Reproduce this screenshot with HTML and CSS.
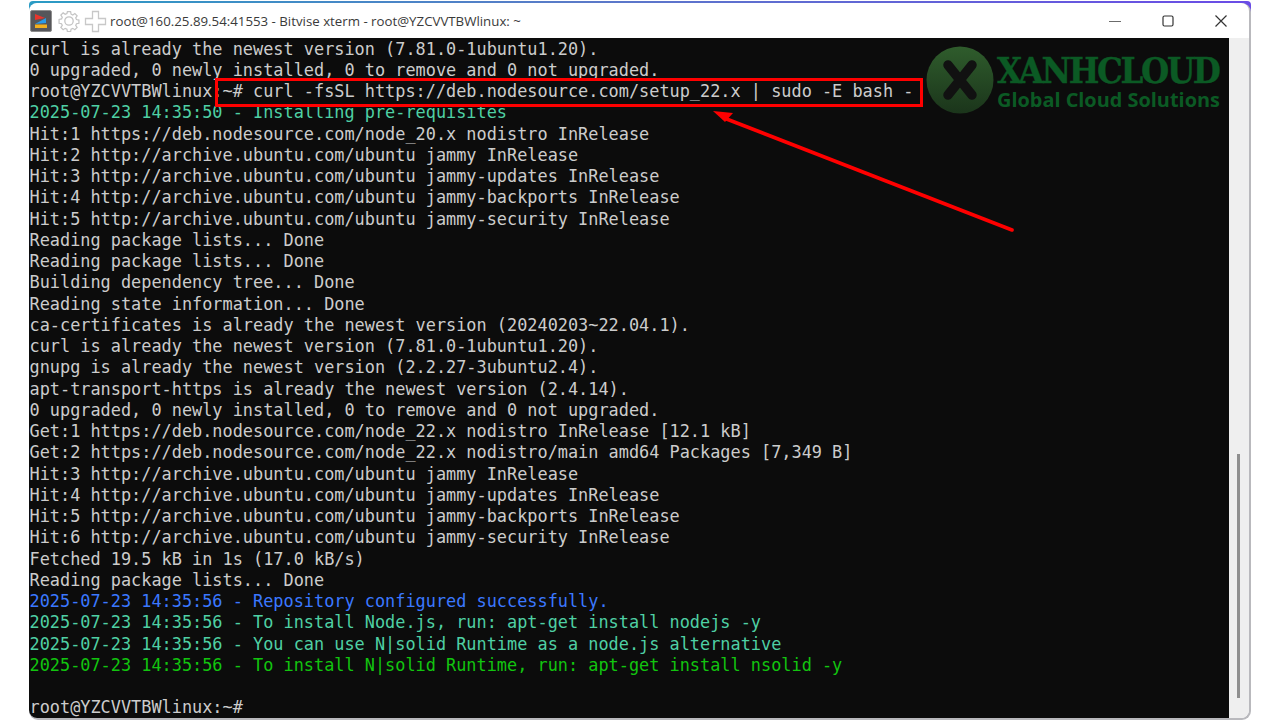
FILE: index.html
```html
<!DOCTYPE html>
<html lang="en">
<head>
<meta charset="utf-8">
<title>Bitvise xterm</title>
<link rel="stylesheet" href="styles.css">
</head>
<body>
<div class="desktop">
  <div class="backdrop"></div>
  <div class="window">
    <header class="titlebar">
      <div class="title-left">
        <svg class="app-icon" width="22" height="22" viewBox="0 0 22 22">
          <rect x="0.5" y="0.5" width="21" height="21" rx="1.5" fill="#56565a" stroke="#8d8d8d"/>
          <path d="M5 4 L15 8 L5 10 Z" fill="#e8352c"/>
          <path d="M16 8 L5 14 L16 13 Z" fill="#2a9be8"/>
          <rect x="5" y="14.5" width="12" height="3.5" fill="#f2b01e"/>
        </svg>
        <svg class="gear-icon" width="22" height="22" viewBox="0 0 22 22" fill="none" stroke="#c4c4c4" stroke-width="1.3">
          <circle cx="11" cy="11" r="4.2"/>
          <path d="M9.3 1.2h3.4l.5 2.6 1.8.8 2.2-1.5 2.4 2.4-1.5 2.2.8 1.8 2.6.5v3.4l-2.6.5-.8 1.8 1.5 2.2-2.4 2.4-2.2-1.5-1.8.8-.5 2.6H9.3l-.5-2.6-1.8-.8-2.2 1.5-2.4-2.4 1.5-2.2-.8-1.8-2.6-.5V9.3l2.6-.5.8-1.8-1.5-2.2 2.4-2.4 2.2 1.5 1.8-.8z" transform="translate(0.6 0.6) scale(.945)"/>
        </svg>
        <svg class="plus-icon" width="23" height="23" viewBox="0 0 23 23" fill="none" stroke="#c8c8c8" stroke-width="1.3">
          <path d="M8.5 1.5h6v7h7v6h-7v7h-6v-7h-7v-6h7z"/>
        </svg>
        <span class="title-text">root@160.25.89.54:41553 - Bitvise xterm - root@YZCVVTBWlinux: ~</span>
      </div>
      <div class="controls">
        <svg width="12" height="12" viewBox="0 0 12 12" stroke="#6b6b6b" stroke-width="1.2"><path d="M0 6.5h12"/></svg>
        <svg width="12" height="12" viewBox="0 0 12 12" fill="none" stroke="#333" stroke-width="1.2"><rect x="1" y="1" width="10" height="10" rx="1.5"/></svg>
        <svg width="12" height="12" viewBox="0 0 12 12" stroke="#333" stroke-width="1.2"><path d="M0.5 0.5l11 11M11.5 0.5l-11 11"/></svg>
      </div>
    </header>
    <div class="body">
      <main class="terminal">
        <div class="line">curl is already the newest version (7.81.0-1ubuntu1.20).</div>
        <div class="line">0 upgraded, 0 newly installed, 0 to remove and 0 not upgraded.</div>
        <div class="line">root@YZCVVTBWlinux:~# curl -fsSL https://deb.nodesource.com/setup_22.x | sudo -E bash -</div>
        <div class="line teal">2025-07-23 14:35:50 - Installing pre-requisites</div>
        <div class="line">Hit:1 https://deb.nodesource.com/node_20.x nodistro InRelease</div>
        <div class="line">Hit:2 http://archive.ubuntu.com/ubuntu jammy InRelease</div>
        <div class="line">Hit:3 http://archive.ubuntu.com/ubuntu jammy-updates InRelease</div>
        <div class="line">Hit:4 http://archive.ubuntu.com/ubuntu jammy-backports InRelease</div>
        <div class="line">Hit:5 http://archive.ubuntu.com/ubuntu jammy-security InRelease</div>
        <div class="line">Reading package lists... Done</div>
        <div class="line">Reading package lists... Done</div>
        <div class="line">Building dependency tree... Done</div>
        <div class="line">Reading state information... Done</div>
        <div class="line">ca-certificates is already the newest version (20240203~22.04.1).</div>
        <div class="line">curl is already the newest version (7.81.0-1ubuntu1.20).</div>
        <div class="line">gnupg is already the newest version (2.2.27-3ubuntu2.4).</div>
        <div class="line">apt-transport-https is already the newest version (2.4.14).</div>
        <div class="line">0 upgraded, 0 newly installed, 0 to remove and 0 not upgraded.</div>
        <div class="line">Get:1 https://deb.nodesource.com/node_22.x nodistro InRelease [12.1 kB]</div>
        <div class="line">Get:2 https://deb.nodesource.com/node_22.x nodistro/main amd64 Packages [7,349 B]</div>
        <div class="line">Hit:3 http://archive.ubuntu.com/ubuntu jammy InRelease</div>
        <div class="line">Hit:4 http://archive.ubuntu.com/ubuntu jammy-updates InRelease</div>
        <div class="line">Hit:5 http://archive.ubuntu.com/ubuntu jammy-backports InRelease</div>
        <div class="line">Hit:6 http://archive.ubuntu.com/ubuntu jammy-security InRelease</div>
        <div class="line">Fetched 19.5 kB in 1s (17.0 kB/s)</div>
        <div class="line">Reading package lists... Done</div>
        <div class="line blue">2025-07-23 14:35:56 - Repository configured successfully.</div>
        <div class="line teal">2025-07-23 14:35:56 - To install Node.js, run: apt-get install nodejs -y</div>
        <div class="line teal">2025-07-23 14:35:56 - You can use N|solid Runtime as a node.js alternative</div>
        <div class="line green">2025-07-23 14:35:56 - To install N|solid Runtime, run: apt-get install nsolid -y</div>
        <div class="line">&nbsp;</div>
        <div class="line">root@YZCVVTBWlinux:~#</div>
      </main>
      <aside class="scrollbar"><div class="thumb"></div></aside>
    </div>
  </div>

  <div class="logo">
    <svg class="logo-mark" width="68" height="68" viewBox="0 0 68 68">
      <defs>
        <linearGradient id="logoFill" x1="0" y1="0" x2="0" y2="1">
          <stop offset="0" stop-color="#2f5c2c"/>
          <stop offset="1" stop-color="#1b351b"/>
        </linearGradient>
      </defs>
      <circle cx="34" cy="34" r="33.5" fill="url(#logoFill)"/>
      <path d="M22 19 L46 49 M46 19 L22 49" stroke="#111" stroke-width="9.5" stroke-linecap="round"/>
    </svg>
    <div class="logo-text">
      <div class="logo-name">XANHCLOUD</div>
      <div class="logo-tag">Global Cloud Solutions</div>
    </div>
  </div>

  <div class="highlight"></div>
  <svg class="arrow" width="320" height="130" viewBox="0 0 320 130">
    <path d="M302 121 L14 9" stroke="#f00" stroke-width="3.6" stroke-linecap="round"/>
    <path d="M3 2 L23 4 L15 13 Z" fill="#f00"/>
  </svg>
</div>
</body>
</html>
```
FILE: styles.css
```css
* { box-sizing: border-box; }
html, body { margin: 0; height: 100%; background: #fff; overflow: hidden; }

.desktop {
  position: relative;
  width: 1280px;
  height: 720px;
  padding: 3px 31px 2px 29px;
  display: flex;
}
.backdrop {
  position: absolute;
  left: 29px;
  top: 1px;
  width: 1222px;
  height: 59px;
  border-radius: 4px 4px 0 0;
  background: linear-gradient(90deg, #2a9bc4 0%, #5a7ac8 45%, #6a4ce6 100%);
}
.window {
  position: relative;
  flex: 1;
  display: flex;
  flex-direction: column;
  background: #fff;
  border-radius: 8px;
  overflow: hidden;
  box-shadow: 1px 1px 0 1px #b9b9bd;
}
.titlebar {
  height: 35px;
  flex: none;
  display: flex;
  align-items: center;
  justify-content: space-between;
  padding: 0 22px 0 1px;
}
.title-left { display: flex; align-items: center; }
.app-icon { margin-top: 1px; }
.gear-icon { margin-left: 6px; margin-top: 1px; }
.plus-icon { margin-left: 4px; margin-top: 1px; }
.title-text {
  margin-left: 3px;
  font: 13.28px/18px "Open Sans", "Noto Sans", sans-serif;
  color: #3a3a3a;
  white-space: nowrap;
}
.controls { display: flex; gap: 41px; align-items: center; }
.body { flex: 1; display: flex; min-height: 0; }
.terminal {
  flex: 1;
  background: #0c0c0c;
  padding: 0.6px 0 0 0.5px;
  color: #cccccc;
  font: 16.89px/21.26px "DejaVu Sans Mono", "Liberation Mono", monospace;
  overflow: hidden;
}
.line { height: 21.26px; white-space: pre; }
.teal { color: #4fd0a4; }
.blue { color: #3b78ff; }
.green { color: #12c40f; }
.scrollbar {
  width: 20px;
  flex: none;
  background: #efefef;
  padding-top: 416px;
  display: flex;
  justify-content: center;
}
.thumb { width: 3px; height: 244px; background: #8f8f8f; margin-left: -1px; }

.highlight {
  position: absolute;
  left: 215px;
  top: 78px;
  width: 708px;
  height: 29px;
  border: 3px solid #f00;
}
.arrow { position: absolute; left: 710px; top: 109px; }

.logo {
  position: absolute;
  left: 926px;
  top: 46px;
  display: flex;
  gap: 3px;
}
.logo-text { padding-top: 11px; }
.logo-name {
  font: 700 36px/26px "DejaVu Serif Condensed", "DejaVu Serif", serif;
  color: #0b5a24;
  letter-spacing: -2.3px;
  white-space: nowrap;
  -webkit-text-stroke: 0.4px #0b5a24;
}
.logo-tag {
  margin-top: 7px;
  font: 700 19.9px/20px "Open Sans", "Noto Sans", sans-serif;
  color: #0b5a24;
  white-space: nowrap;
}
```
